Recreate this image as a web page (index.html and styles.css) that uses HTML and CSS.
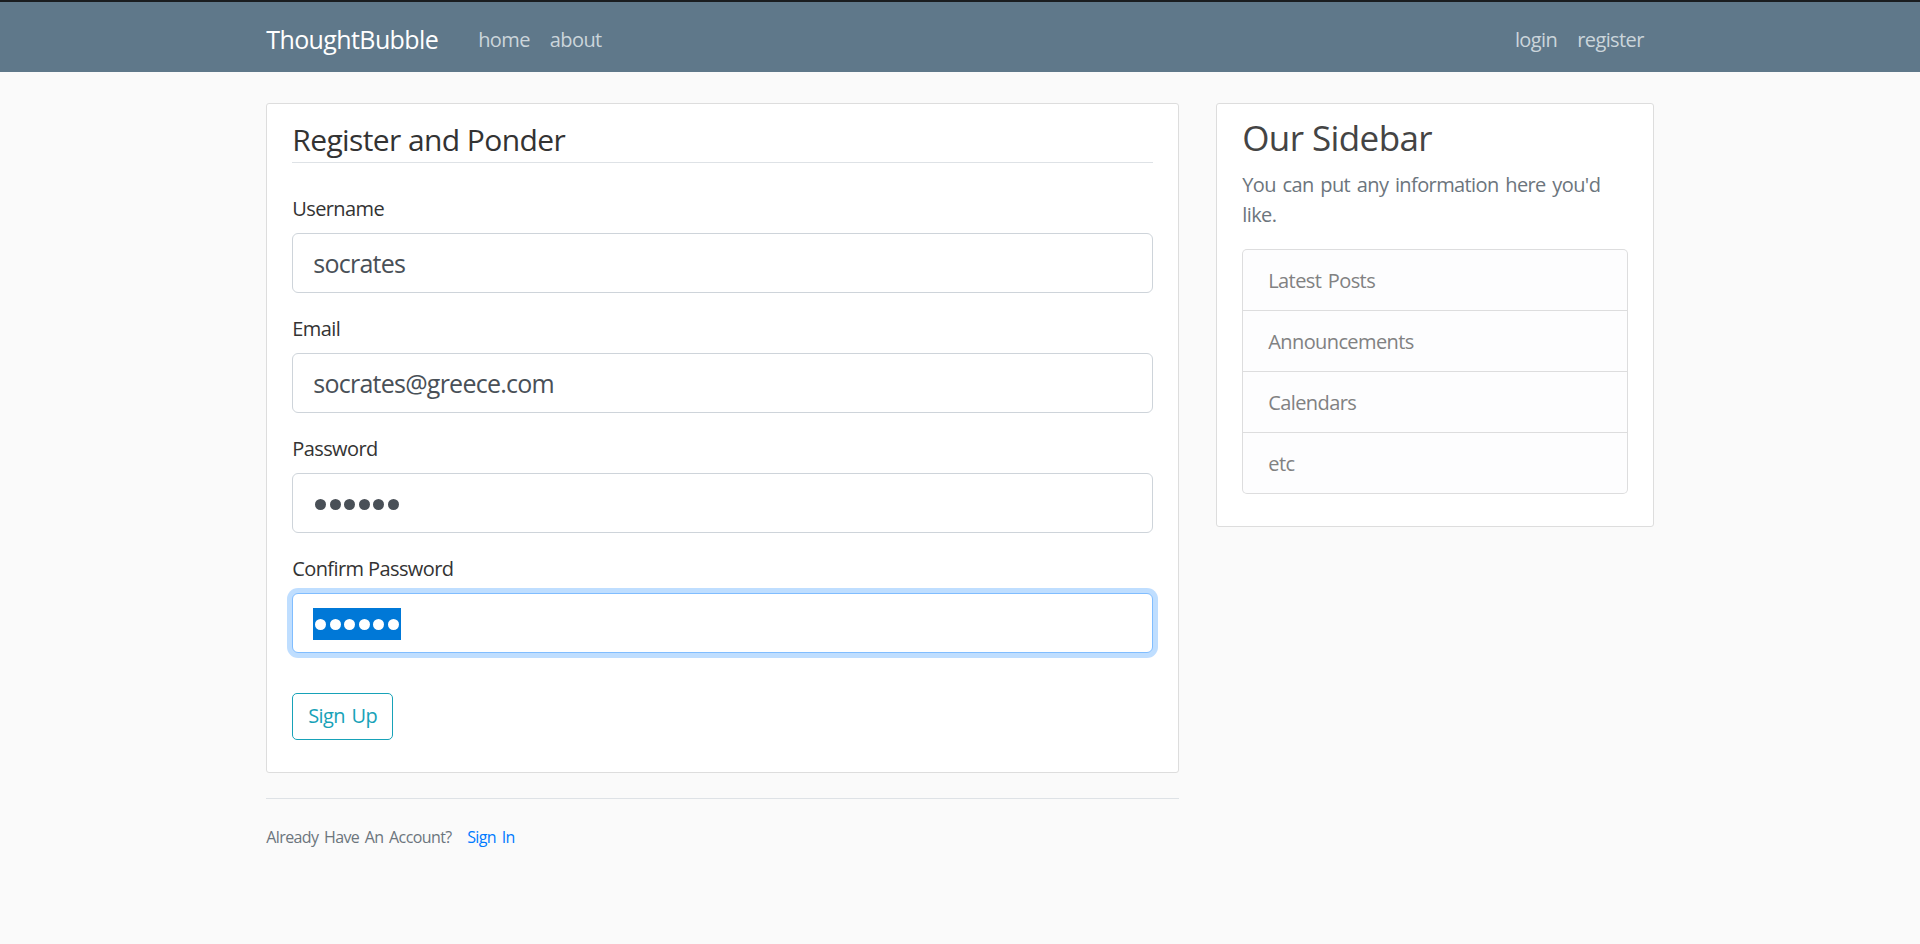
FILE: index.html
```
<!DOCTYPE html>
<html lang="en">
<head>
<meta charset="utf-8">
<title>ThoughtBubble - Register</title>
<link rel="stylesheet" href="styles.css">
</head>
<body>
<div class="topline"></div>
<header class="site-header">
  <nav class="navbar">
    <div class="container nav-inner">
      <a class="navbar-brand" href="#">ThoughtBubble</a>
      <div class="navbar-nav">
        <a class="nav-link" href="#">home</a>
        <a class="nav-link" href="#">about</a>
      </div>
      <div class="navbar-nav nav-right">
        <a class="nav-link" href="#">login</a>
        <a class="nav-link" href="#">register</a>
      </div>
    </div>
  </nav>
</header>
<main class="container">
  <div class="row">
    <div class="col-main">
      <div class="content-section">
        <form>
          <fieldset class="form-group fieldset">
            <legend class="legend">Register and Ponder</legend>
            <div class="form-group">
              <label class="form-label">Username</label>
              <input class="form-control" type="text" value="socrates">
            </div>
            <div class="form-group">
              <label class="form-label">Email</label>
              <input class="form-control" type="text" value="socrates@greece.com">
            </div>
            <div class="form-group">
              <label class="form-label">Password</label>
              <div class="form-control pw"><span class="dots"><i></i><i></i><i></i><i></i><i></i><i></i></span></div>
            </div>
            <div class="form-group">
              <label class="form-label">Confirm Password</label>
              <div class="form-control pw focused"><span class="dots selected"><i></i><i></i><i></i><i></i><i></i><i></i></span></div>
            </div>
          </fieldset>
          <div class="form-group">
            <button class="btn-outline-info" type="button">Sign Up</button>
          </div>
        </form>
      </div>
      <div class="border-top">
        <small class="text-muted">Already Have An Account? <a class="signin" href="#">Sign In</a></small>
      </div>
    </div>
    <div class="col-side">
      <div class="content-section">
        <h3 class="side-title">Our Sidebar</h3>
        <p class="text-muted side-text">You can put any information here you'd like.</p>
        <ul class="list-group">
          <li class="list-group-item">Latest Posts</li>
          <li class="list-group-item">Announcements</li>
          <li class="list-group-item">Calendars</li>
          <li class="list-group-item">etc</li>
        </ul>
      </div>
    </div>
  </div>
</main>
</body>
</html>
```
FILE: styles.css
```
* { box-sizing: border-box; }

html, body {
  margin: 0;
  padding: 0;
}

body {
  background: #fafafa;
  color: #333333;
  font-family: "Open Sans", "Noto Sans", sans-serif;
  font-size: 20px;
  line-height: 30px;
  letter-spacing: -0.03em;
  word-spacing: 2px;
  min-height: 944px;
}

.topline {
  height: 2px;
  background: #1a1d20;
}

.site-header {
  background-color: #5f788a;
}

.navbar {
  padding: 13px 0 7px;
}

.container {
  width: 1425px;
  margin: 0 auto;
  padding: 0 18.75px;
}

.nav-inner {
  display: flex;
  align-items: center;
}

.navbar-brand {
  color: #ffffff;
  text-decoration: none;
  font-size: 25px;
  line-height: 37.5px;
  padding: 6.25px 0;
  margin-right: 30px;
  word-spacing: 0;
}

.navbar-nav {
  display: flex;
}

.nav-right {
  margin-left: auto;
}

.nav-link {
  color: #cbd5db;
  text-decoration: none;
  padding: 10px 10px;
  font-size: 20px;
  line-height: 30px;
}

main.container {
  padding-top: 31px;
}

.row {
  display: flex;
  margin: 0 -18.75px;
}

.col-main {
  width: 950px;
  padding: 0 18.75px;
}

.col-side {
  width: 475px;
  padding: 0 18.75px;
}

.content-section {
  background: #ffffff;
  padding: 12.5px 25px;
  border: 1px solid #dddddd;
  border-radius: 3px;
  margin-bottom: 25px;
}

form { margin: 0; }

.fieldset {
  border: 0;
  padding: 0;
  margin: 0 0 20px;
  min-width: 0;
}

.legend {
  display: block;
  width: 100%;
  padding: 0;
  font-size: 30px;
  line-height: 45px;
  margin-bottom: 30px;
  border-bottom: 1px solid #dee2e6;
  color: #333333;
  word-spacing: 0;
}

.form-group {
  margin-bottom: 20px;
}

.form-label {
  display: inline-block;
  margin-bottom: 10px;
  padding-top: 1px;
  color: #333333;
  word-spacing: 0;
}

.form-control {
  display: block;
  width: 100%;
  height: 60px;
  margin-top: -1px;
  padding: 10px 20px;
  font-family: inherit;
  font-size: 25px;
  line-height: 37.5px;
  letter-spacing: -0.03em;
  color: #495057;
  background: #ffffff;
  border: 1px solid #ced4da;
  border-radius: 6px;
  outline: none;
}

.pw {
  display: flex;
  align-items: center;
}

.focused {
  border-color: #80bdff;
  box-shadow: 0 0 0 5px rgba(0, 123, 255, 0.25);
}

.dots {
  display: inline-flex;
  align-items: center;
  gap: 3.5px;
  height: 32px;
  padding: 0 2px;
  margin-top: 3px;
}

.dots i {
  display: block;
  width: 11px;
  height: 11px;
  border-radius: 50%;
  background: #495057;
}

.dots.selected {
  background: #0078d7;
}

.dots.selected i {
  background: #ffffff;
}

.btn-outline-info {
  display: inline-block;
  font-family: inherit;
  font-size: 20px;
  line-height: 30px;
  letter-spacing: -0.03em;
  word-spacing: 2px;
  padding: 7.5px 15px;
  color: #17a2b8;
  background: transparent;
  border: 1px solid #17a2b8;
  border-radius: 5px;
  cursor: pointer;
}

.border-top {
  border-top: 1px solid #dee2e6;
  padding-top: 22px;
}

.text-muted {
  color: #6c757d;
}

small {
  font-size: 16px;
}

.signin {
  color: #007bff;
  text-decoration: none;
  margin-left: 10px;
}

.side-title {
  font-size: 35px;
  line-height: 42px;
  font-weight: 500;
  color: #444444;
  margin: 0 0 10px;
  word-spacing: 0;
}

.side-text {
  margin: 0 0 20px;
  padding-top: 1px;
}

.list-group {
  list-style: none;
  margin: -1px 0 20px;
  padding: 0;
  border-radius: 5px;
}

.list-group-item {
  padding: 16px 25px 14px;
  color: #818182;
  background: #fdfdfe;
  border: 1px solid rgba(0, 0, 0, 0.125);
  margin-bottom: -1px;
}

.list-group-item:first-child {
  border-top-left-radius: 5px;
  border-top-right-radius: 5px;
}

.list-group-item:last-child {
  margin-bottom: 0;
  border-bottom-left-radius: 5px;
  border-bottom-right-radius: 5px;
}
```
